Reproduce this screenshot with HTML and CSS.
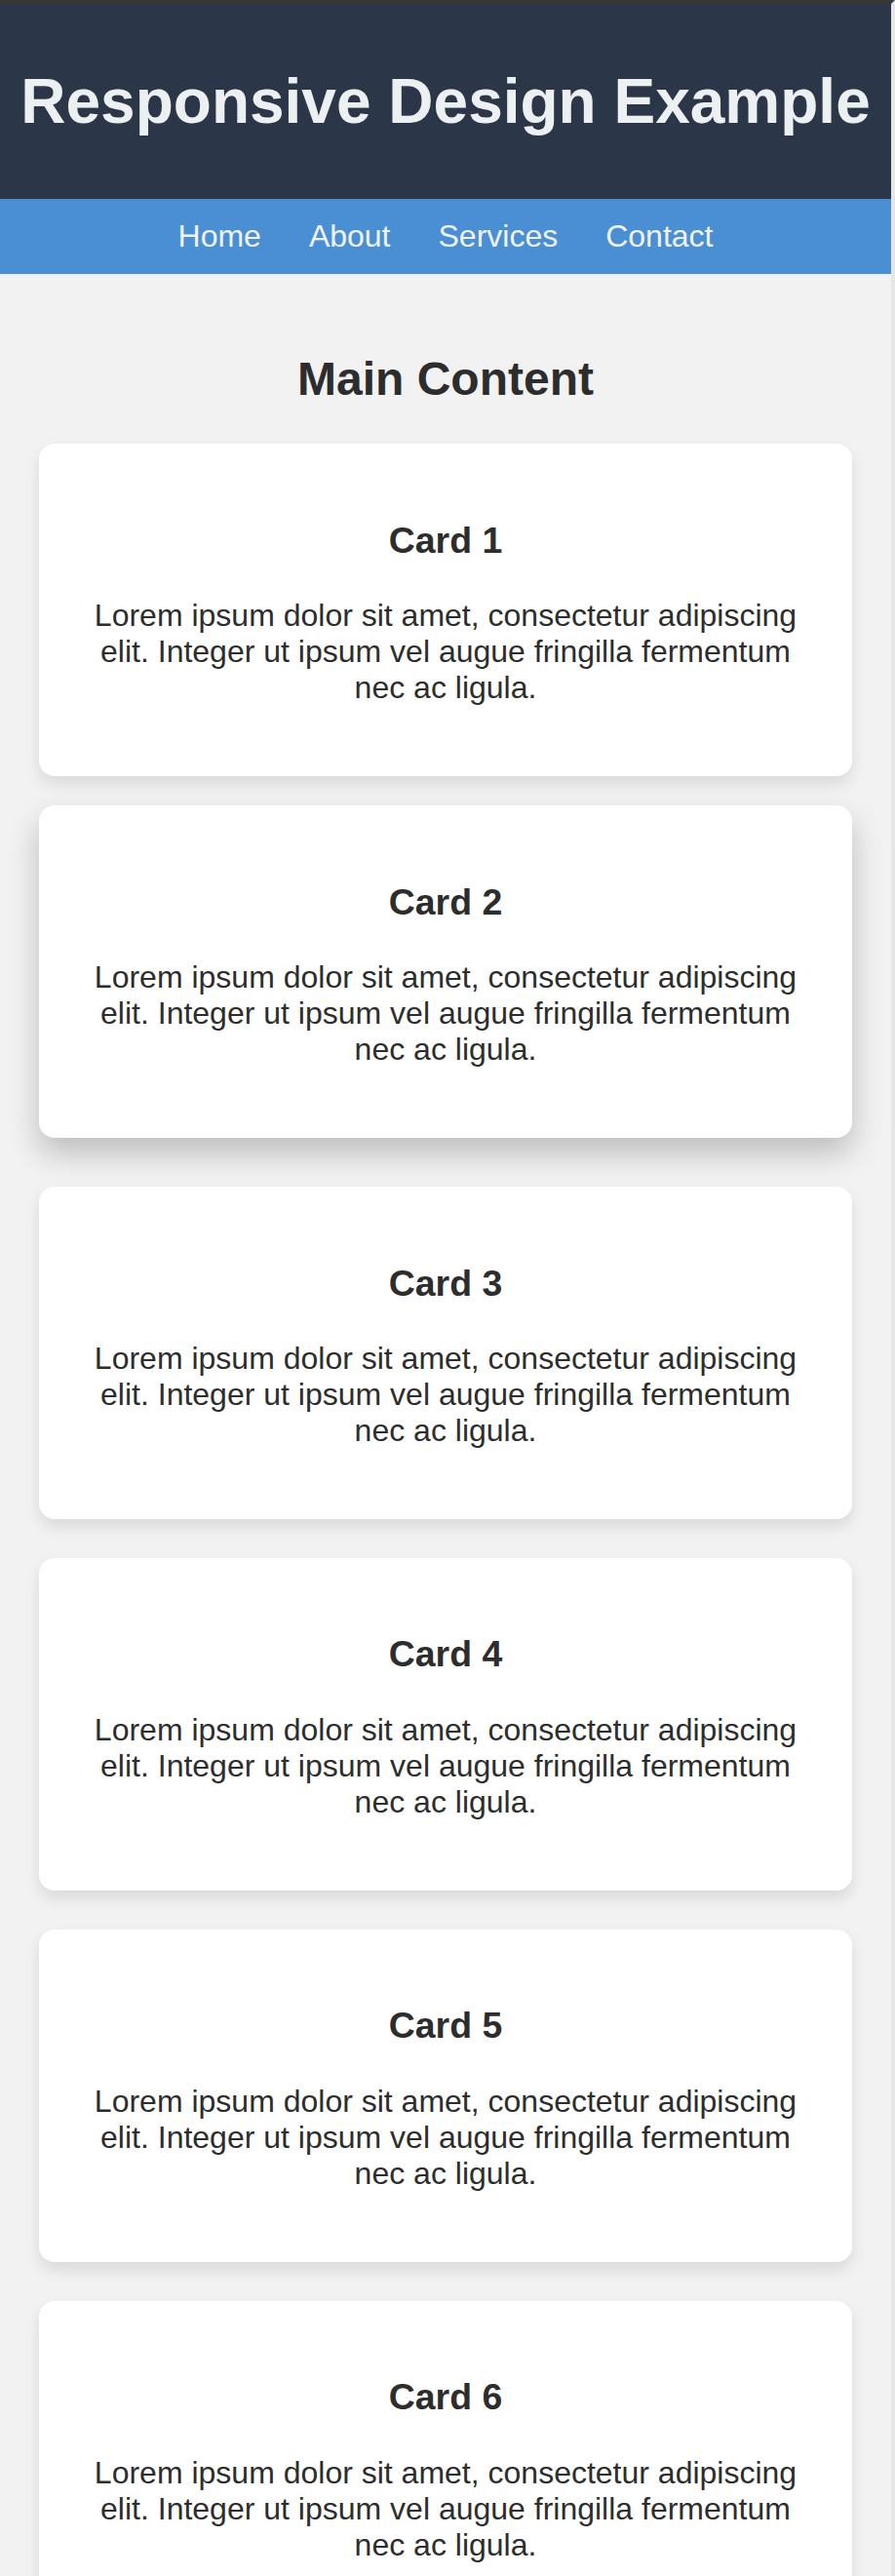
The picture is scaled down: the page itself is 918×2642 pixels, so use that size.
FILE: index.html
```html
<!DOCTYPE html>
<html lang="en">
<head>
<meta charset="utf-8">
<title>Responsive Design Example</title>
<link rel="stylesheet" href="styles.css">
</head>
<body>
<header class="site-header">
  <h1 class="site-title">Responsive Design Example</h1>
</header>
<nav class="site-nav">
  <a href="#" class="nav-link">Home</a>
  <a href="#" class="nav-link">About</a>
  <a href="#" class="nav-link">Services</a>
  <a href="#" class="nav-link">Contact</a>
</nav>
<main class="main">
  <h2 class="main-title">Main Content</h2>
  <div class="cards">
    <div class="card">
      <h3 class="card-title">Card 1</h3>
      <p class="card-text">Lorem ipsum dolor sit amet, consectetur adipiscing elit. Integer ut ipsum vel augue fringilla fermentum nec ac ligula.</p>
    </div>
    <div class="card card-hover">
      <h3 class="card-title">Card 2</h3>
      <p class="card-text">Lorem ipsum dolor sit amet, consectetur adipiscing elit. Integer ut ipsum vel augue fringilla fermentum nec ac ligula.</p>
    </div>
    <div class="card">
      <h3 class="card-title">Card 3</h3>
      <p class="card-text">Lorem ipsum dolor sit amet, consectetur adipiscing elit. Integer ut ipsum vel augue fringilla fermentum nec ac ligula.</p>
    </div>
    <div class="card">
      <h3 class="card-title">Card 4</h3>
      <p class="card-text">Lorem ipsum dolor sit amet, consectetur adipiscing elit. Integer ut ipsum vel augue fringilla fermentum nec ac ligula.</p>
    </div>
    <div class="card">
      <h3 class="card-title">Card 5</h3>
      <p class="card-text">Lorem ipsum dolor sit amet, consectetur adipiscing elit. Integer ut ipsum vel augue fringilla fermentum nec ac ligula.</p>
    </div>
    <div class="card">
      <h3 class="card-title">Card 6</h3>
      <p class="card-text">Lorem ipsum dolor sit amet, consectetur adipiscing elit. Integer ut ipsum vel augue fringilla fermentum nec ac ligula.</p>
    </div>
  </div>
</main>
</body>
</html>
```
FILE: styles.css
```css
html {
  background: #f2f2f2;
}
body {
  margin: 0;
  border-top: 4px solid #373737;
  border-right: 4px solid #e6e6e6;
  background: #f2f2f2;
  font-family: "Liberation Sans", Arial, sans-serif;
  font-size: 32px;
  color: #2d2d2d;
}
.site-header {
  background: #2b3648;
  color: #ecf0f1;
  padding: 20px;
  text-align: center;
}
.site-title {
  margin: 42.88px 0;
  font-size: 64px;
  font-weight: bold;
  line-height: normal;
}
.site-nav {
  background: #4a8ed3;
  padding: 20px 0;
  display: flex;
  justify-content: center;
  gap: 49px;
}
.nav-link {
  color: #f0f3f6;
  text-decoration: none;
  font-size: 32px;
  line-height: normal;
}
.main {
  padding: 40px;
}
.main-title {
  margin: 39.84px 0;
  font-size: 48px;
  font-weight: bold;
  text-align: center;
  line-height: normal;
}
.cards {
  display: flex;
  flex-direction: column;
  gap: 40px;
}
.card {
  background: #ffffff;
  border-radius: 16px;
  padding: 40px;
  text-align: center;
  box-shadow: 0 8px 16px rgba(0, 0, 0, 0.1);
}
.card-hover {
  transform: translateY(-10px);
  box-shadow: 0 16px 32px rgba(0, 0, 0, 0.22);
}
.card-title {
  margin: 37.44px 0;
  font-size: 37.44px;
  font-weight: bold;
  line-height: normal;
}
.card-text {
  margin: 32px 0;
  font-size: 32px;
  line-height: normal;
}
```
